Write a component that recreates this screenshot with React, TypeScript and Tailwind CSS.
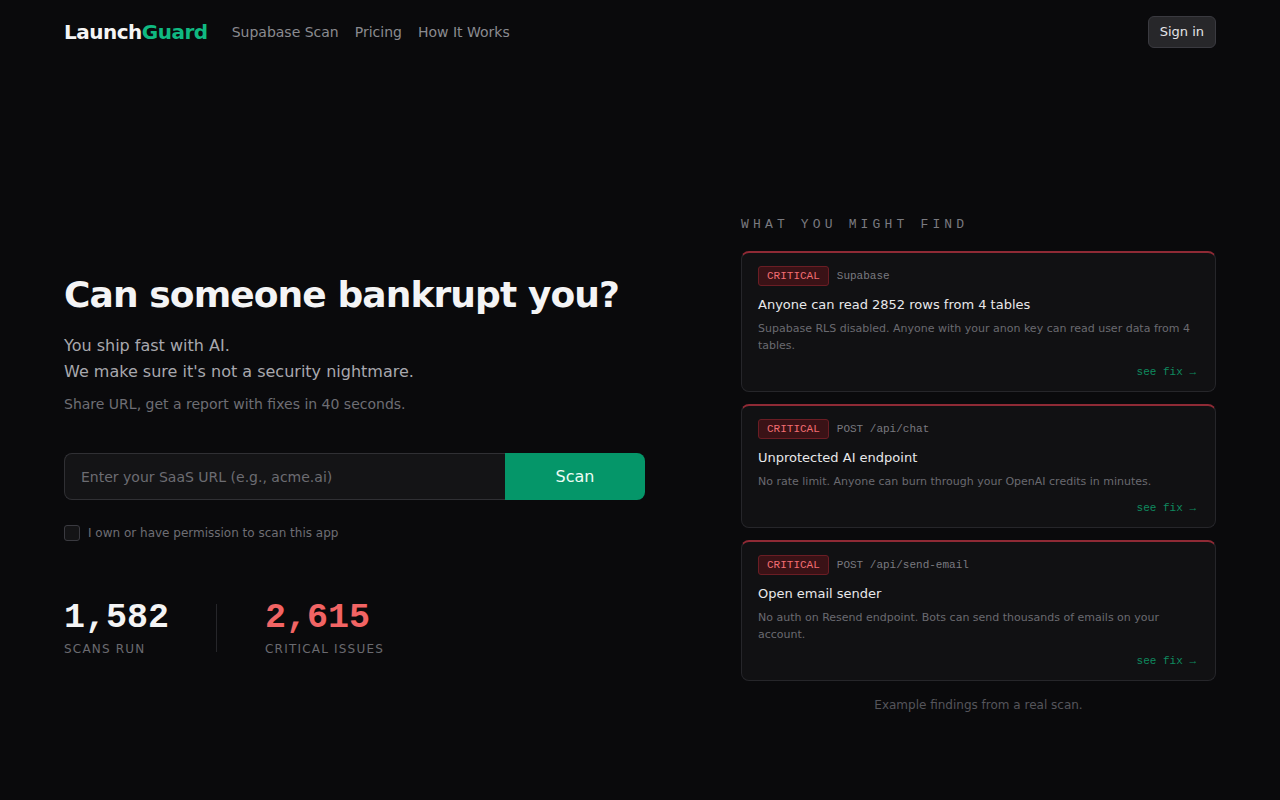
import React from "react";

const sans = { fontFamily: '"DejaVu Sans", sans-serif' };

type Finding = { where: string; title: string; desc: string };

const findings: Finding[] = [
  {
    where: "Supabase",
    title: "Anyone can read 2852 rows from 4 tables",
    desc: "Supabase RLS disabled. Anyone with your anon key can read user data from 4 tables.",
  },
  {
    where: "POST /api/chat",
    title: "Unprotected AI endpoint",
    desc: "No rate limit. Anyone can burn through your OpenAI credits in minutes.",
  },
  {
    where: "POST /api/send-email",
    title: "Open email sender",
    desc: "No auth on Resend endpoint. Bots can send thousands of emails on your account.",
  },
];

function Card({ f }: { f: Finding }) {
  return (
    <div className="rounded-lg border border-[#26262a] border-t-2 border-t-[#8f2a35] bg-[#111113] px-4 pt-[13px] pb-[11px]">
      <div className="flex items-center gap-2 font-['Liberation_Mono',monospace] text-[11px]">
        <span className="h-5 flex items-center rounded-[3px] border border-[#6b1d24] bg-[#3a1216] px-2 text-[#f26d72] leading-4">
          CRITICAL
        </span>
        <span className="text-[#7a7a80]">{f.where}</span>
      </div>
      <div className="mt-[9px] text-[13px] leading-5 text-[#e8e8ea]">{f.title}</div>
      <div className="mt-[5px] text-[11px] leading-[17px] text-[#6a6a70]">{f.desc}</div>
      <div className="mt-2.5 mr-[3px] text-right font-['Liberation_Mono',monospace] text-[11px] leading-4 text-[#0f8a5f]">
        see fix →
      </div>
    </div>
  );
}

export default function App() {
  return (
    <div style={sans} className="min-h-screen bg-[#0a0a0c] text-white">
      <div className="mx-auto max-w-6xl">
        <header className="flex h-16 items-center justify-between">
          <div className="flex items-center">
            <div className="text-xl font-bold tracking-tight text-[#f5f5f5]">
              Launch<span className="text-[#10b981]">Guard</span>
            </div>
            <nav className="ml-6 flex items-center gap-4 text-sm text-[#8a8a90]">
              <span>Supabase Scan</span>
              <span>Pricing</span>
              <span>How It Works</span>
            </nav>
          </div>
          <button className="h-8 rounded-md border border-[#3a3a40] bg-[#27272a] px-[11px] text-[13px] text-[#e4e4e7]">
            Sign in
          </button>
        </header>

        <section className="grid grid-cols-[581px_475px] items-start gap-24 pt-[151px]">
          <div className="mt-[60px]">
            <h1 className="text-4xl font-bold tracking-tight text-[#f4f4f5]">Can someone bankrupt you?</h1>
            <p className="mt-[18px] text-base leading-[26px] text-[#a8a8ae]">
              You ship fast with AI.
              <br />
              We make sure it's not a security nightmare.
            </p>
            <p className="mt-[9px] text-sm leading-5 text-[#6e6e74]">
              Share URL, get a report with fixes in 40 seconds.
            </p>

            <div className="mt-[39px] flex h-[47px]">
              <input
                className="min-w-0 flex-1 rounded-l-lg border-y border-l border-[#303034] bg-[#141416] px-4 text-sm text-white outline-none placeholder:text-[#6c6c72]"
                placeholder="Enter your SaaS URL (e.g., acme.ai)"
              />
              <button className="w-[140px] rounded-r-lg bg-[#059669] text-base text-[#ecfdf5]">Scan</button>
            </div>

            <label className="mt-[25px] flex h-4 items-center gap-2 text-xs text-[#6e6e74]">
              <span className="h-4 w-4 rounded-[3px] border border-[#3a3a40] bg-[#141416]" />
              I own or have permission to scan this app
            </label>

            <div className="mt-[57px] flex items-center">
              <div>
                <div className="font-['Liberation_Mono',monospace] text-[35px] font-bold leading-10 text-[#f4f4f5]">
                  1,582
                </div>
                <div className="mt-[3px] text-xs uppercase leading-4 tracking-widest text-[#6a6a70]">Scans run</div>
              </div>
              <div className="ml-[47px] h-12 w-px bg-[#26262a]" />
              <div className="ml-[48px]">
                <div className="font-['Liberation_Mono',monospace] text-[35px] font-bold leading-10 text-[#f26464]">
                  2,615
                </div>
                <div className="mt-[3px] text-xs uppercase leading-4 tracking-widest text-[#6a6a70]">
                  Critical issues
                </div>
              </div>
            </div>
          </div>

          <div>
            <div className="font-['Liberation_Mono',monospace] text-[13px] leading-5 tracking-[0.32em] text-[#7a7a80]">
              WHAT YOU MIGHT FIND
            </div>
            <div className="mt-4 flex flex-col gap-3">
              {findings.map((f) => (
                <Card key={f.where} f={f} />
              ))}
            </div>
            <div className="mt-[15px] text-center text-xs leading-[18px] text-[#55555b]">
              Example findings from a real scan.
            </div>
          </div>
        </section>
      </div>
    </div>
  );
}
